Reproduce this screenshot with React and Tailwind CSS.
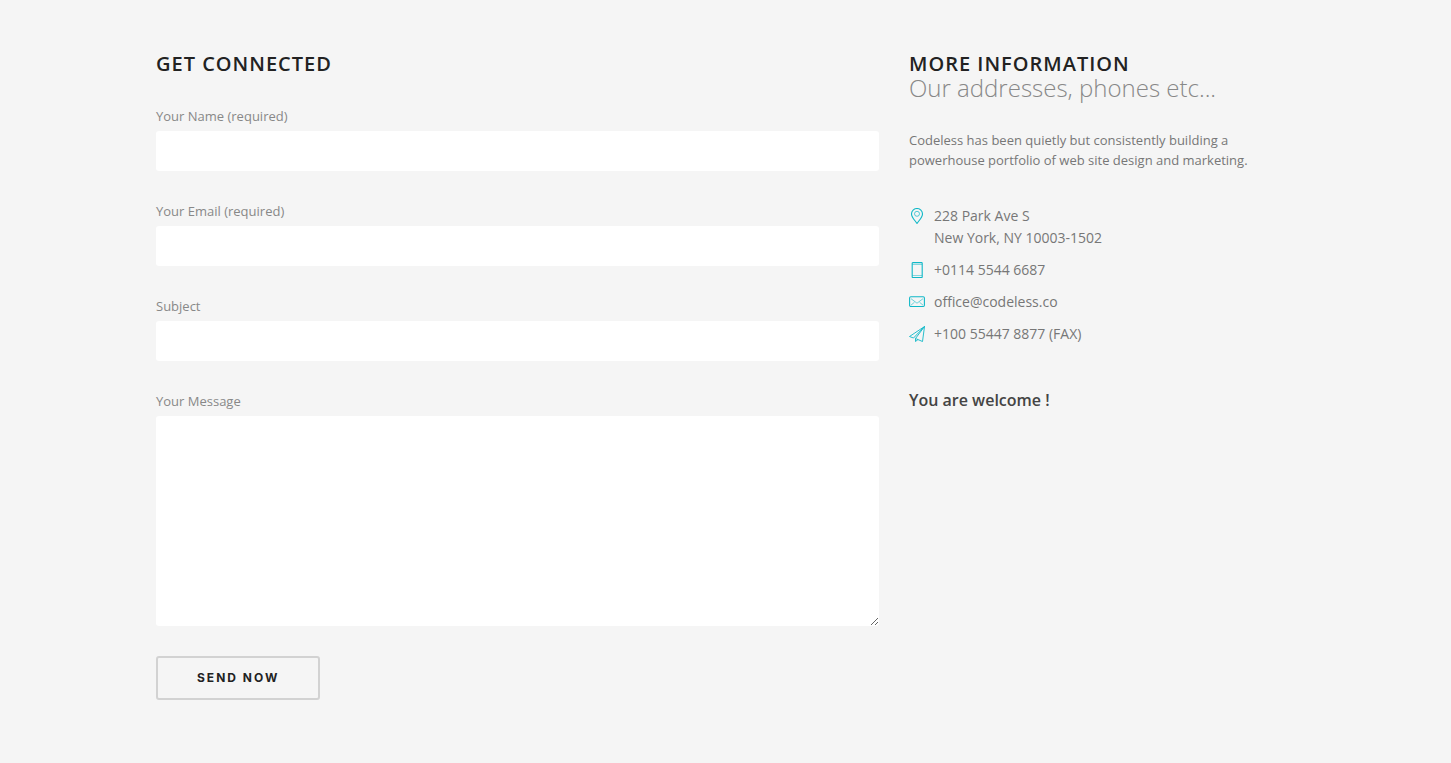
const inputClass =
  "block w-full rounded-[3px] bg-white px-3 text-[13px] text-[#444] outline-none focus:ring-1 focus:ring-[#10b8c7]";

function Field({ id, label, type = "text", multiline = false }) {
  return (
    <div>
      <label htmlFor={id} className="mb-[5px] block text-[13px] leading-5 text-[#888]">
        {label}
      </label>
      {multiline ? (
        <textarea id={id} className={`${inputClass} h-[210px] resize py-2`} />
      ) : (
        <input id={id} type={type} className={`${inputClass} h-10`} />
      )}
    </div>
  );
}

function Icon({ children }) {
  return (
    <svg
      className="mt-[3px] size-4 shrink-0 text-[#10b8c7]"
      viewBox="0 0 16 16"
      fill="none"
      stroke="currentColor"
      strokeWidth="1"
      strokeLinejoin="round"
      aria-hidden="true"
    >
      {children}
    </svg>
  );
}

function Contact({ icon, children }) {
  return (
    <li className="flex gap-[9px]">
      <Icon>{icon}</Icon>
      <div>{children}</div>
    </li>
  );
}

export default function App() {
  return (
    <main className="min-h-screen bg-[#f5f5f5] px-5 pt-[52px] pb-16 font-['Open_Sans',sans-serif]">
      <div className="mx-auto grid max-w-[1139px] grid-cols-1 gap-[30px] md:grid-cols-[723fr_386fr]">
        <section>
          <h1 className="text-[20px] leading-6 font-semibold tracking-[1px] text-[#222]">GET CONNECTED</h1>
          <form className="mt-[30px] flex flex-col items-stretch" onSubmit={(e) => e.preventDefault()}>
            <div className="flex flex-col gap-[30px]">
              <Field id="name" label="Your Name (required)" />
              <Field id="email" label="Your Email (required)" type="email" />
              <Field id="subject" label="Subject" />
              <Field id="message" label="Your Message" multiline />
            </div>
            <button
              type="submit"
              className="mt-[30px] h-11 self-start rounded-[3px] border-2 border-[#d2d2d2] px-[39px] font-['Inter',sans-serif] text-[12px] font-bold tracking-[2px] text-[#222]"
            >
              SEND NOW
            </button>
          </form>
        </section>

        <section>
          <h2 className="text-[20px] leading-6 font-semibold tracking-[1px] text-[#222]">MORE INFORMATION</h2>
          <p className="text-[24px] leading-6 font-light text-[#888]">Our addresses, phones etc...</p>
          <p className="mt-[30px] max-w-[350px] text-[13px] leading-5 text-[#777]">
            Codeless has been quietly but consistently building a powerhouse portfolio of web site design and marketing.
          </p>
          <ul className="mt-[35px] flex flex-col gap-[10px] text-[14px] leading-[22px] text-[#777]">
            <Contact
              icon={
                <>
                  <path d="M8 15.500C6.200 12.700 2.500 9.300 2.500 5.900a5.500 5.400 0 0 1 11 0C13.500 9.300 9.800 12.700 8 15.500Z" strokeWidth="1.100" />
                  <circle cx="8" cy="5.800" r="2.500" strokeWidth="0.700" />
                </>
              }
            >
              228 Park Ave S<br />
              New York, NY 10003-1502
            </Contact>
            <Contact
              icon={
                <>
                  <rect x="3.200" y="0.600" width="10" height="14.900" rx="0.600" strokeWidth="1.100" />
                  <path d="M3.200 2.500h10M3.200 13.500h10" strokeWidth="0.500" />
                </>
              }
            >
              +0114 5544 6687
            </Contact>
            <Contact
              icon={
                <>
                  <rect x="0.600" y="2.700" width="14.800" height="9.800" rx="1.200" strokeWidth="1.100" />
                  <path d="m2 4.700 6 4.500 6-4.500M2 11.200l3.500-3M14 11.200l-3.500-3" strokeWidth="0.600" />
                </>
              }
            >
              office@codeless.co
            </Contact>
            <Contact
              icon={
                <path
                  d="M15.500.500.500 10.500l4 1.500L15.500.500l-9 12L13.500 15.500 15.500.500M6.500 12.500v3l2.500-2"
                  strokeWidth="0.900"
                />
              }
            >
              +100 55447 8877 (FAX)
            </Contact>
          </ul>
          <p className="mt-[43px] text-[16px] leading-6 font-semibold text-[#444]">You are welcome !</p>
        </section>
      </div>
    </main>
  );
}
